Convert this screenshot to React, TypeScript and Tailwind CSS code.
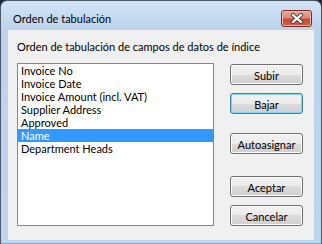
import React from 'react';

const items = [
  'Invoice No',
  'Invoice Date',
  'Invoice Amount (incl. VAT)',
  'Supplier Address',
  'Approved',
  'Name',
  'Department Heads',
];

const Btn = ({ label, focused, className }: { label: string; focused?: boolean; className?: string }) => (
  <button
    className={
      'flex h-[21px] w-[73px] items-center justify-center rounded-[3px] border pt-[1px] leading-[13px] ' +
      'bg-[linear-gradient(#f2f2f2,#ebebeb_50%,#dddddd_50%,#cfcfcf)] ' +
      (focused
        ? 'border-[#3c7fb1] shadow-[inset_0_0_0_1px_#7fd3f5] '
        : 'border-[#707070] shadow-[inset_0_0_0_1px_#fbfbfb] ') +
      (className ?? '')
    }
  >
    {label}
  </button>
);

const App = () => {
  return (
    <div className="h-[244px] w-[322px] bg-[#1d2430] font-['Lato',sans-serif] text-[11px] text-black">
      <div className="flex h-full flex-col rounded-t-[7px] border border-b-0 border-[#4b5868] bg-[linear-gradient(#d3e3f5,#bcd3ec_29px,#bfd5ed)]">
        {/* title bar */}
        <div className="flex h-[29px] flex-none items-start justify-between pl-[12px] pr-[9px] pt-[9px]">
          <span className="mt-[3px] leading-[12px]">Orden de tabulación</span>
          <div className="flex h-[17px] w-[31px] items-center justify-center rounded-[3px] border border-[#7a2c22] bg-[linear-gradient(#e9aa9b,#dc8a78_45%,#c64a36_55%,#d0604b)] shadow-[inset_0_0_0_1px_#f0b4a6]">
            <svg width="14" height="11" viewBox="0 0 14 11">
              <path d="M3 2 L11 9 M11 2 L3 9" stroke="#4a4a4a" strokeWidth="4.2" strokeLinecap="round" />
              <path d="M3 2 L11 9 M11 2 L3 9" stroke="#ffffff" strokeWidth="2.2" strokeLinecap="round" />
            </svg>
          </div>
        </div>
        {/* client area */}
        <div className="mx-[7px] flex h-[210px] flex-none flex-col bg-[#f0f0f0] px-[9px] pt-[11px]">
          <div className="h-[12px] leading-[12px]">Orden de tabulación de campos de datos de índice</div>
          <div className="mt-[10px] flex">
            <div className="h-[163px] w-[197px] border border-[#828790] bg-white">
              {items.map((it) => (
                <div
                  key={it}
                  className={
                    'h-[13px] whitespace-nowrap pl-[3px] pt-[1px] leading-[12px] ' +
                    (it === 'Name' ? 'bg-[#3399ff] text-white' : '')
                  }
                >
                  {it}
                </div>
              ))}
            </div>
            <div className="ml-[16px] flex flex-col pt-[1px]">
              <Btn label="Subir" />
              <Btn label="Bajar" focused className="mt-[8px]" />
              <Btn label="Autoasignar" className="mt-[19px]" />
              <Btn label="Aceptar" className="mt-[22px]" />
              <Btn label="Cancelar" className="mt-[8px]" />
            </div>
          </div>
        </div>
        <div className="flex-1 border-b border-[#2fcbe2]" />
      </div>
    </div>
  );
};

export default App;
